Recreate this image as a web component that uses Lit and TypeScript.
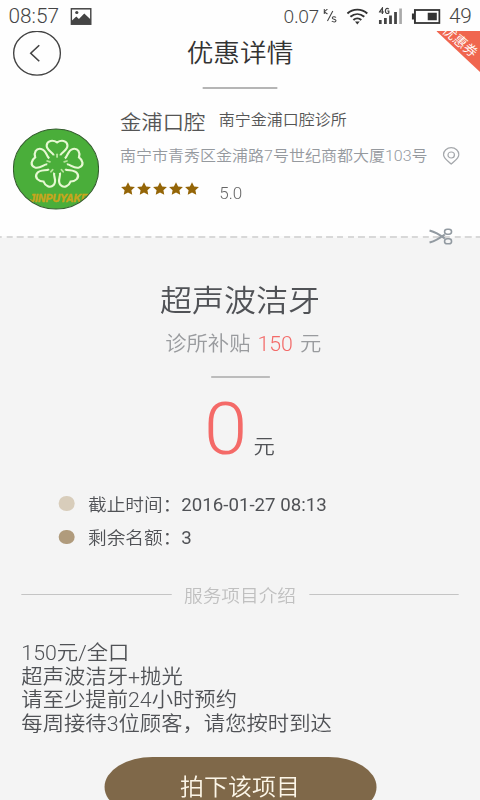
import { LitElement, html, css, svg } from "lit";
import { customElement } from "lit/decorators.js";

const PETAL = "M-2.800 -8 C-3.500 -11 -9.500 -12.500 -9 -17.500 C-8.500 -22 -3.500 -22.500 0 -20 C3.500 -22.500 8.500 -22 9 -17.500 C9.500 -12.500 3.500 -11 2.800 -8";
const DESCRIPTION = [
  "150元/全口",
  "超声波洁牙+抛光",
  "请至少提前24小时预约",
  "每周接待3位顾客，请您按时到达",
];

// Digits sit one weight above the Chinese text around them.
const mixed = (text: string) =>
  text.split(/([0-9][0-9\-: ]*)/).map((part) => (/^[0-9]/.test(part) ? html`<span class="num">${part}</span>` : part));

@customElement("status-bar")
export class StatusBar extends LitElement {
  static styles = css`
    :host { display: flex; align-items: center; height: 31px; box-sizing: border-box; padding: 1px 8px 0 8px; color: #444; font-size: 19.5px; font-weight: 300; }
    svg { display: block; flex: none; }
    .photo { margin-left: 10.500px; }
    .speed { margin-left: auto; font-family: "Noto Sans", sans-serif; font-size: 17.5px; letter-spacing: -0.3px; }
    .unit { margin-left: 4px; }
    .wifi { margin-left: 9px; }
    .signal { margin-left: 10px; }
    .battery { margin-left: 9px; }
    .level { margin-left: 8px; font-size: 19.5px; letter-spacing: -0.3px; }
  `;
  render() {
    return html`
      <span>08:57</span>
      <svg class="photo" width="20" height="17" viewBox="0 0 20 17">
        <rect x=".8" y=".8" width="18.400" height="15.400" fill="none" stroke="#444" stroke-width="1.500" />
        <path d="M1 13 L5.500 8.500 L8 11 L13 5.500 L19 11.500 V16 H1Z" fill="#444" /><circle cx="6" cy="4.500" r="1.500" fill="#444" />
      </svg>
      <span class="speed">0.07</span>
      <svg class="unit" width="13" height="14" viewBox="0 0 13 14" fill="none" stroke="#444" stroke-width="1">
        <path d="M1 0V5M4 0L1 3L4 5M9 2L4 12M12 8.500C11 7.500 8.500 7.500 8.500 9C8.500 10.500 12 10 12 11.500C12 13.500 9 13 8 12" />
      </svg>
      <svg class="wifi" width="20" height="17" viewBox="0 0 20 17" fill="none" stroke="#333" stroke-width="1.900">
        <path d="M.7 5.500C6 .3 14 .3 19.300 5.500M3.500 8.800C7.500 5.200 12.500 5.200 16.500 8.800M6.300 12C8.500 9.900 11.500 9.900 13.700 12" />
        <path d="M7.800 13.600H12.200L10 16.500Z" fill="#333" stroke="none" />
      </svg>
      <svg class="signal" width="22" height="18" viewBox="0 0 22 18" fill="#444">
        <path d="M.2 13h2.600v4H.2zM5 11h2.600v6H5zM9.800 8.500h2.600V17H9.800zM14.500 5h2.600v12h-2.600z" />
        <path d="M19.300 1.500h2.500V17h-2.500z" fill="#aaa" />
        <path d="M3.500 7V1L.8 5H5M9.500 2.200C8 .5 6.300 1.500 6.300 4S8 7 9.500 6V4H8.100" fill="none" stroke="#444" stroke-width="1.200" />
      </svg>
      <svg class="battery" width="27" height="15" viewBox="0 0 27 15">
        <rect x="3" y="1" width="23" height="13" fill="none" stroke="#333" stroke-width="1.800" />
        <path d="M0 4.500h3v6H0z" fill="#333" /><path d="M15 3.700h8.500v7.600H15z" fill="#333" />
      </svg>
      <span class="level">49</span>
    `;
  }
}

@customElement("page-header")
export class PageHeader extends LitElement {
  static styles = css`
    :host { display: grid; grid-template-columns: 57px 1fr 57px; height: 77px; position: relative; overflow: hidden; }
    .back { display: block; margin-left: 12px; }
    .heading { display: flex; flex-direction: column; align-items: center; }
    .title { font-size: 25px; line-height: 30px; height: 30px; margin-top: 8px; color: #333; }
    .rule { width: 70px; height: 1.5px; background: #b5b5b5; margin-top: 18px; }
    .ribbon { position: absolute; right: 0; top: 0; width: 41px; height: 41px; background: #f0664f; clip-path: polygon(0 0, 100% 0, 100% 100%); }
    .ribbon span { position: absolute; left: 0; top: 4px; width: 44px; text-align: center; color: #fff; font-size: 13px; line-height: 14px; transform: rotate(42deg); white-space: nowrap; }
  `;
  render() {
    return html`
      <svg class="back" width="46" height="45" viewBox="0 0 46 45" fill="none" stroke="#444">
        <circle cx="22.700" cy="22.200" r="21.900" stroke-width="1.300" />
        <path d="M24.800 14.300L16.800 22.200L24.800 30.200" stroke-width="1.500" />
      </svg>
      <div class="heading"><div class="title">优惠详情</div><div class="rule"></div></div>
      <div class="ribbon"><span>优惠券</span></div>
    `;
  }
}

@customElement("clinic-card")
export class ClinicCard extends LitElement {
  static styles = css`
    :host { display: flex; height: 128px; box-sizing: border-box; padding-left: 12px; }
    .logo { flex: none; margin-top: 20px; width: 81px; height: 82px; }
    .logo text { font: italic bold 11.5px "Liberation Sans", Arial, sans-serif; }
    .info { margin-left: 19.5px; flex: 1; white-space: nowrap; }
    .names { display: flex; height: 28px; color: #555; }
    .name { font-size: 20px; line-height: 30px; }
    .full { font-size: 15px; line-height: 24px; margin-left: 12.5px; }
    .address { display: flex; align-items: center; margin-top: 9px; height: 22px; line-height: 22px; font-size: 15px; color: #95999e; }
    .address svg { margin-left: 14px; }
    .rating { display: flex; height: 22px; margin-top: 15px; }
    .stars { display: block; }
    .score { margin-left: 18px; font-size: 16px; line-height: 22px; margin-top: 1px; color: #666; }
  `;
  render() {
    return html`
      <svg class="logo" viewBox="0 0 81 82">
        <defs><clipPath id="disc"><circle cx="40.500" cy="41" r="40" /></clipPath></defs>
        <circle cx="40.500" cy="41" r="40" fill="#4aae3a" />
        <g transform="translate(41.500 36) scale(1.080)" fill="none" stroke="#e6f8d2" stroke-width="1.900">
          ${[0, 72, 144, 216, 288].map((a) => svg`<g transform="rotate(${a})"><path d=${PETAL} /><path d="M0 -6.500V-9" stroke="#b5e39b" stroke-width="1.600" stroke-linecap="round" /></g>`)}
        </g>
        <text x="15.500" y="74.500" fill="#c9a51c" stroke="#c9a51c" stroke-width=".5" clip-path="url(#disc)" textLength="55" lengthAdjust="spacingAndGlyphs">JINPUYAKE</text>
        <circle cx="40.500" cy="41" r="40" fill="none" stroke="#345c2e" stroke-width="1" />
      </svg>
      <div class="info">
        <div class="names"><span class="name">金浦口腔</span><span class="full">南宁金浦口腔诊所</span></div>
        <div class="address">
          <span>南宁市青秀区金浦路7号世纪商都大厦103号</span>
          <svg width="16" height="18" viewBox="0 0 16 18" fill="none" stroke="#a5a8ac" stroke-width="1.200">
            <path d="M8 17C5 14 .8 11.500 .8 7.500A7.200 6.800 0 0 1 15.200 7.500C15.200 11.500 11 14 8 17Z" /><circle cx="8" cy="8" r="3" />
          </svg>
        </div>
        <div class="rating">
          <svg class="stars" width="75" height="14" viewBox="0 0 75 14" fill="#946507">
            ${[0.5, 15.5, 30.5, 45.5, 60.5].map((x) => svg`<path transform="translate(${x} 0)" d="M6.500 .3L8.500 4.500L13 5L9.700 8.300L10.500 12.800L6.500 10.600L2.500 12.800L3.300 8.300L0 5L4.500 4.500Z" />`)}
          </svg>
          <span class="score">5.0</span>
        </div>
      </div>
    `;
  }
}

@customElement("cut-line")
export class CutLine extends LitElement {
  static styles = css`
    :host { display: block; position: relative; height: 1.5px; background: repeating-linear-gradient(90deg, #d8d8d8 0 6px, #fafafa 6px 10px); background-position: -4px 0; }
    svg { position: absolute; left: 402px; top: -8px; }
  `;
  render() {
    return html`<svg width="23" height="17" viewBox="0 0 23 17" fill="none" stroke="#929aa1" stroke-width="1.500">
      <path d="M.7 2.500C6 4 10 6.500 15 10.500M.7 14.500C6 13 10 10.500 15 6.500" stroke-width="2" />
      <rect x="14.800" y="1.200" width="6.500" height="5" rx="2.400" /><rect x="14.800" y="10.800" width="6.500" height="5" rx="2.400" />
    </svg>`;
  }
}

@customElement("offer-detail")
export class OfferDetail extends LitElement {
  static styles = css`
    :host { display: flex; flex-direction: column; align-items: center; color: #505256; }
    .num { font-weight: 400; }
    .title { font-size: 30px; line-height: 40px; margin-top: 43px; }
    .subsidy { display: flex; gap: 6.5px; margin: 8px 0 0 6px; font-size: 20px; line-height: 30px; color: #999b9e; }
    .amount { color: #f36b69; }
    .rule { width: 55px; height: 2px; background: #bcbcbc; margin-top: 17px; }
    .price { display: flex; align-items: baseline; margin: 15px 0 0 -1px; height: 72px; line-height: 72px; font-size: 20px; }
    .zero { font-size: 73px; color: #f46a68; margin-right: 6px; }
    .facts { align-self: stretch; margin: 22px 0 0 55px; font-size: 17.5px; }
    .fact { display: flex; align-items: center; height: 33.500px; }
    .dot { width: 14.5px; height: 14.5px; border-radius: 50%; background: #d8cdbb; margin-right: 13px; }
    .dark { background: #b09b7c; }
    .section { align-self: stretch; display: flex; align-items: center; gap: 12px; margin: 27px 20px 0; height: 28px; font-size: 17.5px; color: #c0c0c0; }
    .section i { flex: 1; height: 1px; background: #c4c4c4; }
    .text { align-self: stretch; margin: 33.500px 20px 0; font-size: 20px; line-height: 23.7px; }
    .buy { width: 255px; height: 60px; border: 0; border-radius: 45px / 30px; margin-top: 20.500px; padding: 0; background: #7f6849; color: #fcf6e8; font: inherit; font-size: 22.5px; line-height: 60px; flex: none; }
  `;
  render() {
    return html`
      <div class="title">超声波洁牙</div>
      <div class="subsidy"><span>诊所补贴</span><span class="amount">150</span><span>元</span></div>
      <div class="rule"></div>
      <div class="price"><span class="zero">0</span><span>元</span></div>
      <div class="facts">
        <div class="fact"><span class="dot"></span><span>${mixed("截止时间：2016-01-27 08:13")}</span></div>
        <div class="fact"><span class="dot dark"></span><span>${mixed("剩余名额：3")}</span></div>
      </div>
      <div class="section"><i></i><span>服务项目介绍</span><i></i></div>
      <div class="text">${DESCRIPTION.map((line) => html`<div>${line}</div>`)}</div>
      <button class="buy">拍下该项目</button>
    `;
  }
}

@customElement("app-root")
export class AppRoot extends LitElement {
  static styles = css`
    :host { display: block; width: 480px; height: 800px; overflow: hidden; background: #f4f4f4; }
    .screen { width: 450px; height: 800px; overflow: hidden; transform: scaleX(1.066667); transform-origin: 0 0; font-family: Roboto, "Noto Sans CJK SC", sans-serif; font-weight: 350; }
    .top { background: #fefefe; }
  `;
  render() {
    return html`<div class="screen">
      <div class="top"><status-bar></status-bar><page-header></page-header><clinic-card></clinic-card></div>
      <cut-line></cut-line>
      <offer-detail></offer-detail>
    </div>`;
  }
}
